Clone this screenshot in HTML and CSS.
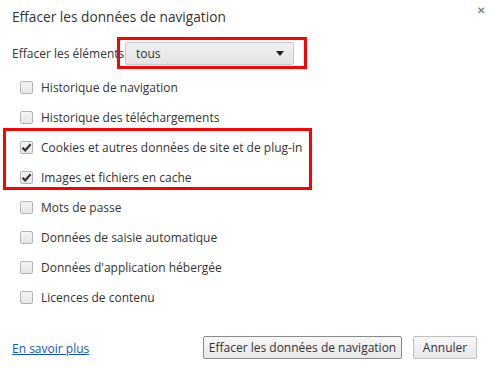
FILE: index.html
```html
<!DOCTYPE html>
<html lang="fr">
<head>
    <meta charset="UTF-8">
    <title>Effacer les données de navigation</title>
    <link rel="stylesheet" href="styles.css">
</head>
<body>
    <div class="dialog">
        <span class="close">&#x2715;</span>
        <h1 class="title">Effacer les données de navigation</h1>

        <div class="period">
            <span class="period-label">Effacer les éléments :</span>
            <div class="mark mark-select">
                <div class="select">
                    <span>tous</span>
                    <span class="arrow"></span>
                </div>
            </div>
        </div>

        <div class="options">
            <label class="row"><span class="box"></span>Historique de navigation</label>
            <label class="row"><span class="box"></span>Historique des téléchargements</label>
            <div class="mark mark-rows">
                <label class="row"><span class="box checked"><svg width="11" height="11" viewBox="0 0 11 11"><path d="M1.5 5.8 L4.2 8.4 L9.6 2.2" fill="none" stroke="#333" stroke-width="2.2"/></svg></span>Cookies et autres données de site et de plug-in</label>
                <label class="row"><span class="box checked"><svg width="11" height="11" viewBox="0 0 11 11"><path d="M1.5 5.8 L4.2 8.4 L9.6 2.2" fill="none" stroke="#333" stroke-width="2.2"/></svg></span>Images et fichiers en cache</label>
            </div>
            <label class="row"><span class="box"></span>Mots de passe</label>
            <label class="row"><span class="box"></span>Données de saisie automatique</label>
            <label class="row"><span class="box"></span>Données d'application hébergée</label>
            <label class="row"><span class="box"></span>Licences de contenu</label>
        </div>

        <div class="footer">
            <a href="#" class="more">En savoir plus</a>
            <div class="actions">
                <button class="btn btn-main">Effacer les données de navigation</button>
                <button class="btn btn-cancel">Annuler</button>
            </div>
        </div>
    </div>
</body>
</html>
```

FILE: styles.css
```css
body {
    margin: 0;
    background: white;
    font-family: "Open Sans", "Noto Sans", sans-serif;
    font-size: 12px;
    color: #333;
}
.dialog {
    position: relative;
    width: 491px;
    height: 368px;
    padding: 0 14px 0 12px;
    box-sizing: border-box;
}
.close {
    position: absolute;
    top: 3px;
    right: 6px;
    font-size: 10px;
    font-weight: bold;
    color: #888;
}
.title {
    margin: 0;
    padding-top: 7px;
    height: 28px;
    font-size: 13.7px;
    font-weight: normal;
    color: #333;
}
.period {
    display: flex;
    align-items: center;
    height: 37px;
}
.period-label {
    width: 105px;
    flex-shrink: 0;
    white-space: nowrap;
}
.mark {
    position: relative;
}
.mark::before {
    content: "";
    position: absolute;
    border: 3px solid #f00;
    pointer-events: none;
}
.mark-select {
    padding: 4px 13px 4px 8px;
}
.mark-select::before {
    inset: -1px 0 0 0;
}
.select {
    display: flex;
    align-items: center;
    justify-content: space-between;
    width: 169px;
    height: 23px;
    padding: 0 9px 0 10px;
    box-sizing: border-box;
    border: 1px solid #c8c8c8;
    border-radius: 2px;
    background: linear-gradient(#f0f0f0, #e4e4e4);
    color: #333;
}
.arrow {
    width: 0;
    height: 0;
    border-left: 4px solid transparent;
    border-right: 4px solid transparent;
    border-top: 5px solid #222;
}
.options {
    display: flex;
    flex-direction: column;
}
.row {
    display: flex;
    align-items: center;
    height: 30px;
    padding-left: 8px;
    white-space: nowrap;
}
.mark-rows::before {
    top: -4px;
    bottom: 2px;
    left: -9px;
    right: 165px;
}
.box {
    display: flex;
    align-items: center;
    justify-content: center;
    width: 13px;
    height: 13px;
    margin-right: 8px;
    box-sizing: border-box;
    border: 1px solid #b4b4b4;
    border-radius: 2px;
    background: linear-gradient(#f4f4f4, #e6e6e6);
}
.footer {
    display: flex;
    align-items: center;
    justify-content: space-between;
    margin-top: 24px;
}
.more {
    color: #15c;
    margin-top: 1px;
}
.actions {
    display: flex;
    gap: 11px;
}
.btn {
    height: 23px;
    padding: 0;
    font-family: inherit;
    font-size: 12px;
    color: #333;
    white-space: nowrap;
    border: 1px solid #c0c0c0;
    border-radius: 2px;
    background: linear-gradient(#f6f6f6, #e8e8e8);
}
.btn-main {
    width: 199px;
    border-color: #8a8a8a;
}
.btn-cancel {
    width: 64px;
}
```
